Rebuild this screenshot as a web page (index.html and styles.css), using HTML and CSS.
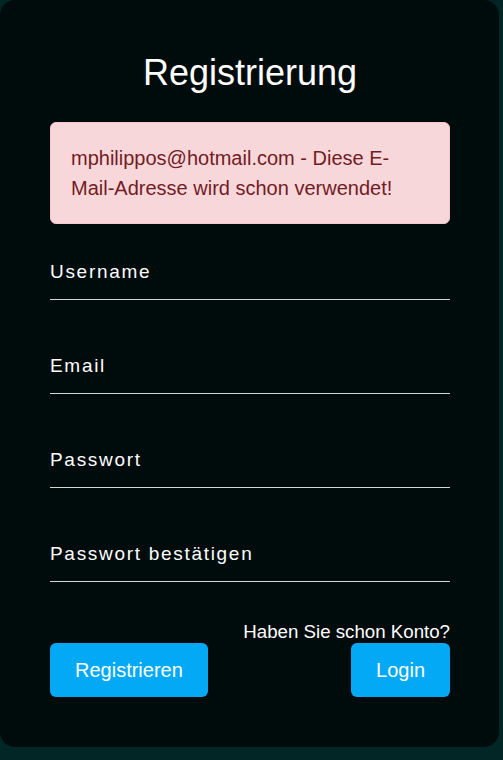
FILE: index.html
```html
<!DOCTYPE html>
<html lang="de">
<head>
<meta charset="utf-8">
<title>Registrierung</title>
<link rel="stylesheet" href="styles.css">
</head>
<body>
<div class="card">
  <h1 class="title">Registrierung</h1>
  <div class="alert">mphilippos@hotmail.com - Diese E-Mail-Adresse wird schon verwendet!</div>
  <div class="field"><label class="label">Username</label></div>
  <div class="field"><label class="label">Email</label></div>
  <div class="field"><label class="label">Passwort</label></div>
  <div class="field field-last"><label class="label">Passwort bestätigen</label></div>
  <div class="hint">Haben Sie schon Konto?</div>
  <div class="actions">
    <button class="btn">Registrieren</button>
    <button class="btn">Login</button>
  </div>
</div>
</body>
</html>
```
FILE: styles.css
```css
html, body {
  margin: 0;
  padding: 0;
}
body {
  background: #022626;
  font-family: "Liberation Sans", Arial, sans-serif;
  height: 760px;
  overflow: hidden;
}
.card {
  box-sizing: border-box;
  width: 499px;
  height: 747px;
  background: #000b0c;
  border-radius: 15px;
  padding: 51px 49px 0 50px;
  display: flex;
  flex-direction: column;
}
.title {
  margin: 0 0 28px;
  font-size: 36px;
  line-height: 43px;
  font-weight: normal;
  color: #fff;
  text-align: center;
}
.alert {
  background: #f8d7da;
  border: 1px solid #f5c6cb;
  color: #721c24;
  border-radius: 6px;
  padding: 20px;
  font-size: 20px;
  line-height: 30px;
  margin-bottom: 40px;
}
.field {
  border-bottom: 1px solid #d6d6d6;
  padding-bottom: 19px;
  margin-bottom: 58px;
}
.field-last {
  margin-bottom: 40px;
}
.label {
  display: block;
  color: #fff;
  font-size: 19px;
  line-height: 16px;
  letter-spacing: 1.7px;
}
.hint {
  color: #fff;
  font-size: 18.7px;
  line-height: 20px;
  text-align: right;
  margin-bottom: 1px;
}
.actions {
  display: flex;
  justify-content: space-between;
}
.btn {
  height: 54px;
  padding: 0 25px;
  border: none;
  border-radius: 6px;
  background: #03a9f4;
  color: #fff;
  font-family: "Liberation Sans", Arial, sans-serif;
  font-size: 20px;
}
```
